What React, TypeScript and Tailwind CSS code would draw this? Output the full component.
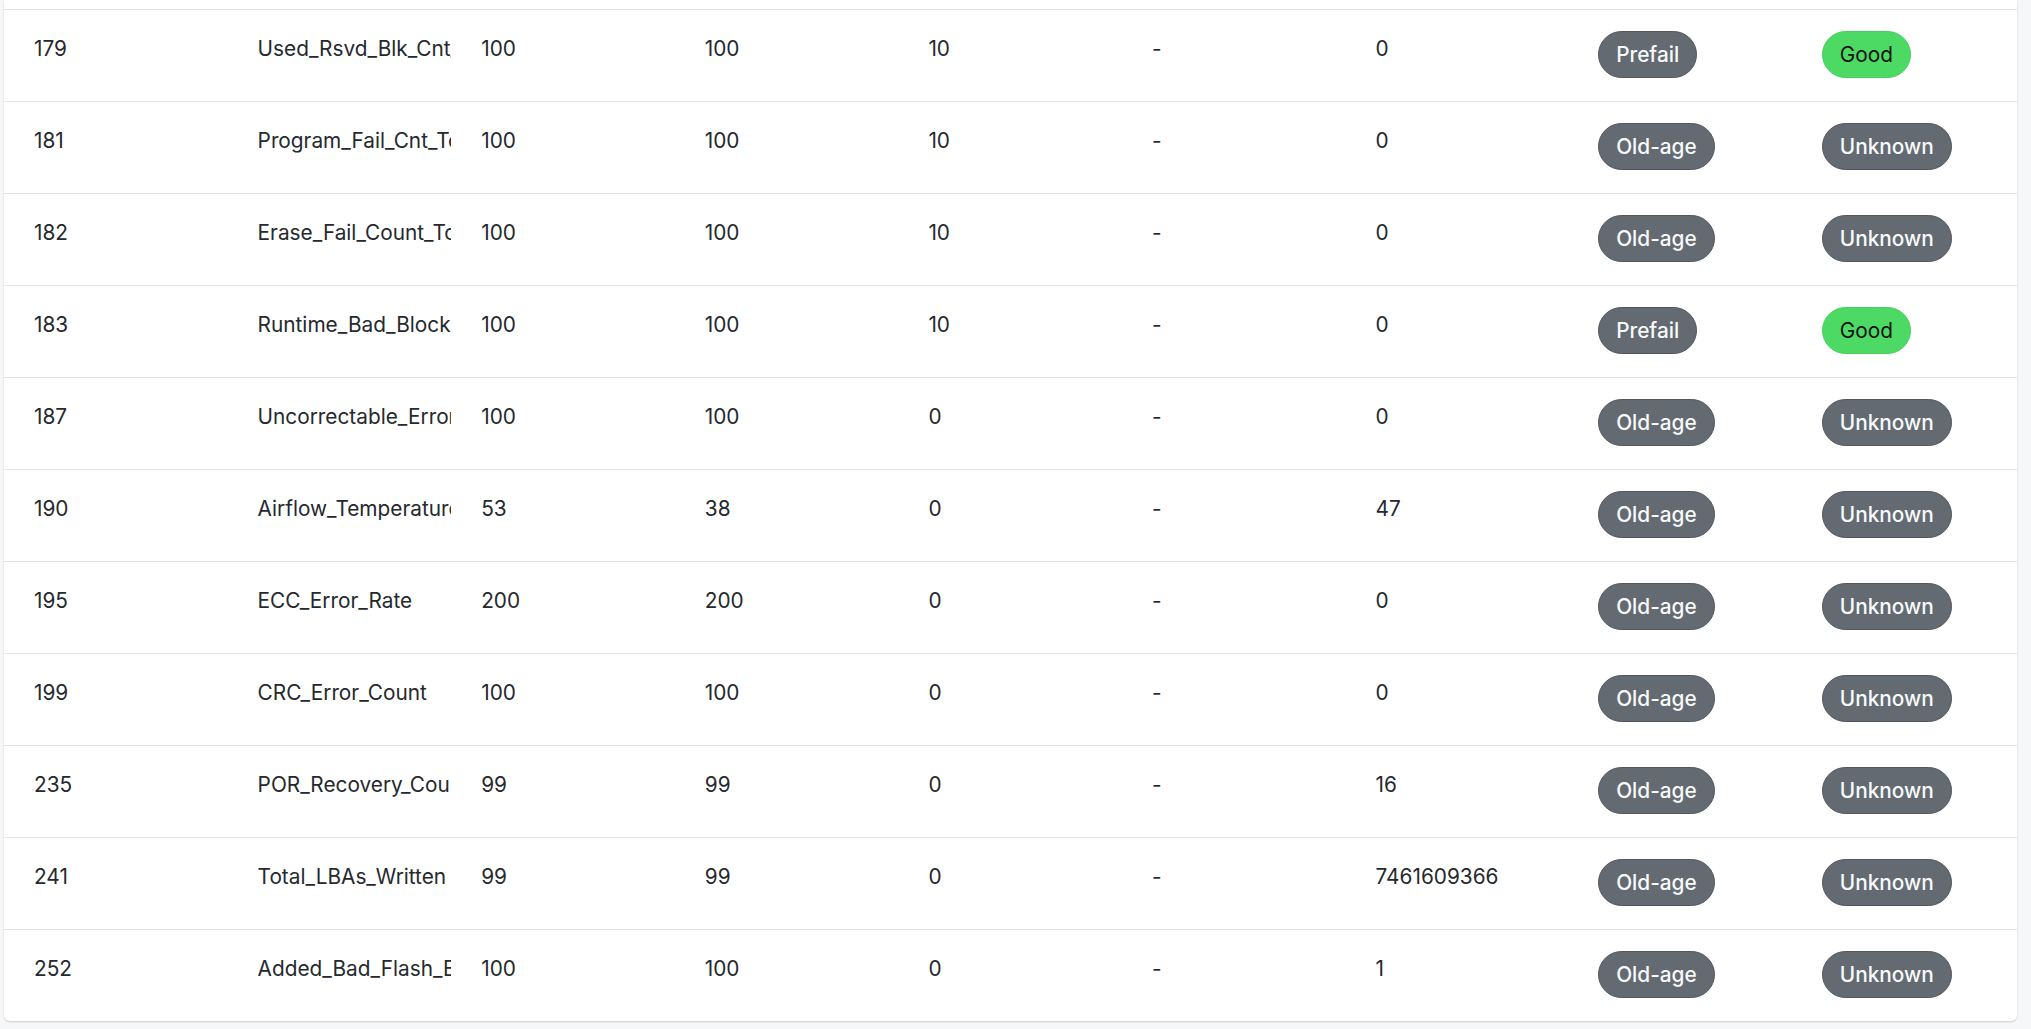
import React from "react";

type Row = {
  id: string;
  name: string;
  value: string;
  worst: string;
  thresh: string;
  failed: string;
  raw: string;
  type: "Prefail" | "Old-age";
  status: "Good" | "Unknown";
};

const rows: Row[] = [
  { id: "179", name: "Used_Rsvd_Blk_Cnt_Tot", value: "100", worst: "100", thresh: "10", failed: "-", raw: "0", type: "Prefail", status: "Good" },
  { id: "181", name: "Program_Fail_Cnt_Total", value: "100", worst: "100", thresh: "10", failed: "-", raw: "0", type: "Old-age", status: "Unknown" },
  { id: "182", name: "Erase_Fail_Count_Total", value: "100", worst: "100", thresh: "10", failed: "-", raw: "0", type: "Old-age", status: "Unknown" },
  { id: "183", name: "Runtime_Bad_Block", value: "100", worst: "100", thresh: "10", failed: "-", raw: "0", type: "Prefail", status: "Good" },
  { id: "187", name: "Uncorrectable_Error_Cnt", value: "100", worst: "100", thresh: "0", failed: "-", raw: "0", type: "Old-age", status: "Unknown" },
  { id: "190", name: "Airflow_Temperature_Cel", value: "53", worst: "38", thresh: "0", failed: "-", raw: "47", type: "Old-age", status: "Unknown" },
  { id: "195", name: "ECC_Error_Rate", value: "200", worst: "200", thresh: "0", failed: "-", raw: "0", type: "Old-age", status: "Unknown" },
  { id: "199", name: "CRC_Error_Count", value: "100", worst: "100", thresh: "0", failed: "-", raw: "0", type: "Old-age", status: "Unknown" },
  { id: "235", name: "POR_Recovery_Count", value: "99", worst: "99", thresh: "0", failed: "-", raw: "16", type: "Old-age", status: "Unknown" },
  { id: "241", name: "Total_LBAs_Written", value: "99", worst: "99", thresh: "0", failed: "-", raw: "7461609366", type: "Old-age", status: "Unknown" },
  { id: "252", name: "Added_Bad_Flash_Blk_Ct", value: "100", worst: "100", thresh: "0", failed: "-", raw: "1", type: "Old-age", status: "Unknown" },
];

function Cell({ children }: { children: React.ReactNode }) {
  return (
    <div className="overflow-hidden whitespace-nowrap pl-[30px] pt-[23px] leading-[31px]">
      {children}
    </div>
  );
}

function Badge({ label, tone }: { label: string; tone: "gray" | "green" }) {
  return (
    <span
      className={
        tone === "green"
          ? "inline-block rounded-full border border-[#46cf5f] bg-[#4cd964] px-[17px] py-[7px] text-[20.8px] font-normal leading-[31px] text-[#111]"
          : "inline-block rounded-full border border-[#50565c] bg-[#636a71] px-[17px] py-[7px] text-[20.8px] font-medium leading-[31px] text-[#f8f9fa]"
      }
    >
      {label}
    </span>
  );
}

export default function App() {
  return (
    <div
      className="h-[1029px] w-[2031px] overflow-hidden bg-[#f6f7f8] pl-[4px] pr-[14px]"
      style={{ fontFamily: "Inter, 'Noto Sans', 'Liberation Sans', sans-serif" }}
    >
      <div className="rounded-b-[6px] bg-white shadow-[0_1px_2px_rgba(0,0,0,0.18)]">
        <div className="h-[9px]" />
        {rows.map((r) => (
          <div
            key={r.id}
            className="grid h-[92px] grid-cols-[repeat(9,223.6px)] border-t border-[#e2e4e7] text-[20.8px] text-[#25292d]"
          >
            <Cell>{r.id}</Cell>
            <Cell>{r.name}</Cell>
            <Cell>{r.value}</Cell>
            <Cell>{r.worst}</Cell>
            <Cell>{r.thresh}</Cell>
            <Cell>{r.failed}</Cell>
            <Cell>{r.raw}</Cell>
            <div className="pl-[29px] pt-[21px]">
              <Badge label={r.type} tone="gray" />
            </div>
            <div className="pl-[29px] pt-[21px]">
              <Badge label={r.status} tone={r.status === "Good" ? "green" : "gray"} />
            </div>
          </div>
        ))}
      </div>
    </div>
  );
}
